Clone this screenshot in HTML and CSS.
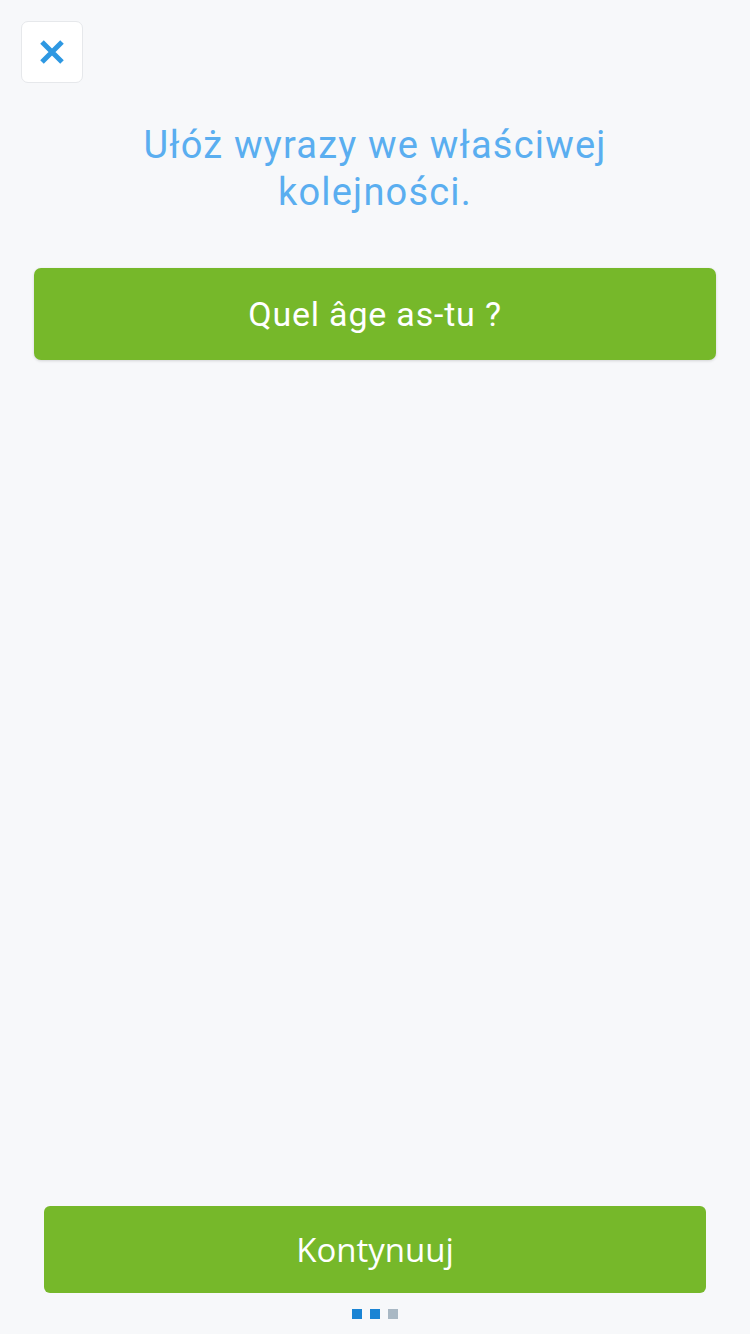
FILE: index.html
```html
<!DOCTYPE html>
<html lang="pl">
<head>
    <meta charset="UTF-8">
    <meta name="viewport" content="width=750">
    <title>Ułóż wyrazy</title>
    <link rel="stylesheet" href="styles.css">
</head>
<body>

    <div class="screen">
        <button class="close" aria-label="Zamknij">
            <svg width="26" height="26" viewBox="0 0 26 26">
                <path d="M3 3 L23 23 M23 3 L3 23" stroke="#2e98e2" stroke-width="5" fill="none"/>
            </svg>
        </button>

        <h1 class="title">Ułóż wyrazy we właściwej<br>kolejności.</h1>

        <div class="sentence">Quel âge as-tu ?</div>

        <div class="bottom">
            <button class="continue">Kontynuuj</button>
            <div class="dots">
                <span class="dot active"></span>
                <span class="dot active"></span>
                <span class="dot"></span>
            </div>
        </div>
    </div>

</body>
</html>
```

FILE: styles.css
```css
body {
    margin: 0;
    background: #f7f8fa;
    font-family: "Open Sans", "Liberation Sans", sans-serif;
}
.screen {
    display: flex;
    flex-direction: column;
    min-height: 1334px;
    box-sizing: border-box;
    padding: 21px 0 15px;
}
.close {
    width: 62px;
    height: 62px;
    margin-left: 21px;
    padding: 0;
    background: #fff;
    border: 1px solid #e6e8eb;
    border-radius: 7px;
    display: flex;
    align-items: center;
    justify-content: center;
}
.title {
    margin: 39px 0 0;
    text-align: center;
    font-family: Roboto, sans-serif;
    font-weight: 400;
    font-size: 38px;
    letter-spacing: 1.2px;
    line-height: 47px;
    color: #5aaef0;
}
.sentence {
    margin: 52px 34px 0;
    height: 92px;
    display: flex;
    align-items: center;
    justify-content: center;
    background: #76b82a;
    border-radius: 7px;
    box-shadow: 0 1px 3px rgba(0, 0, 0, 0.15);
    color: #fff;
    font-family: Roboto, sans-serif;
    font-size: 34px;
    letter-spacing: 0.8px;
}
.bottom {
    margin-top: auto;
    display: flex;
    flex-direction: column;
    align-items: center;
}
.continue {
    width: 662px;
    height: 87px;
    background: #76b82a;
    border: none;
    border-radius: 6px;
    color: #fff;
    font-family: "Open Sans", sans-serif;
    font-size: 33px;
}
.dots {
    display: flex;
    gap: 8px;
    margin-top: 16px;
}
.dot {
    width: 10px;
    height: 10px;
    background: #a9b8c4;
}
.dot.active {
    background: #1a84d4;
}
```
